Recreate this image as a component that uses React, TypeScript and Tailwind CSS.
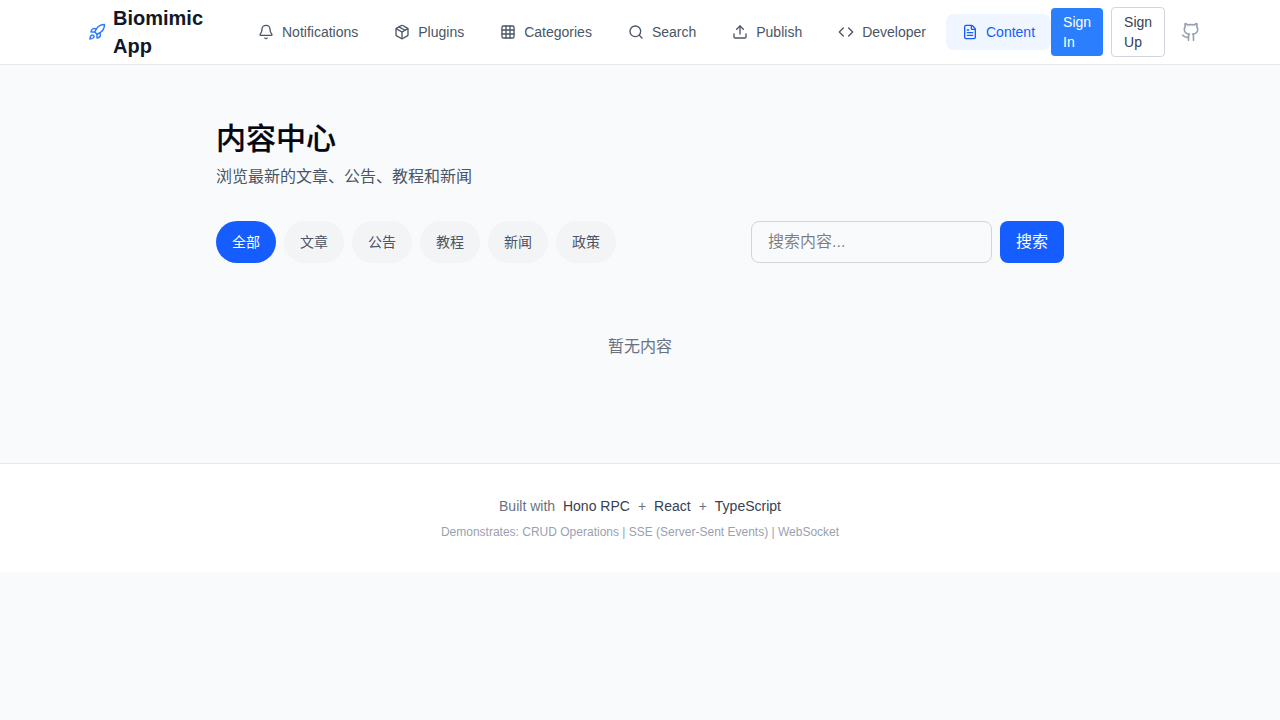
import { Bell, Code, FileText, Github, Grid3x3, Package, Rocket, Search, Upload } from "lucide-react";

const navItems = [
  { label: "Notifications", icon: Bell },
  { label: "Plugins", icon: Package },
  { label: "Categories", icon: Grid3x3 },
  { label: "Search", icon: Search },
  { label: "Publish", icon: Upload },
  { label: "Developer", icon: Code },
];

const tabs = ["全部", "文章", "公告", "教程", "新闻", "政策"];

const sans = "font-['Liberation_Sans','Noto_Sans_CJK_SC',sans-serif]";

export default function App() {
  return (
    <div className={`min-h-[720px] bg-[#f9fafb] ${sans}`}>
      <header className="bg-white border-b border-gray-200">
        <div className="max-w-[1120px] mx-auto h-16 flex items-center">
          <a className="w-[162px] shrink-0 flex items-center gap-[7px] pl-2 pr-4">
            <Rocket className="w-[18px] h-[18px] text-[#2b7fff] shrink-0" />
            <span className="text-xl leading-7 font-bold text-gray-900">Biomimic App</span>
          </a>
          <nav className="flex items-center gap-1">
            {navItems.map((item) => (
              <a key={item.label} className="flex items-center gap-2 px-4 h-9 rounded-lg text-sm text-gray-600 whitespace-nowrap">
                <item.icon className="w-4 h-4" />
                {item.label}
              </a>
            ))}
            <a className="flex items-center gap-2 pl-4 pr-4 h-9 rounded-lg text-sm text-[#155dfc] bg-[#eff6ff] whitespace-nowrap">
              <FileText className="w-4 h-4" />
              Content
            </a>
          </nav>
          <div className="flex items-center gap-2">
            <button className="w-[52px] px-3 py-1 rounded text-sm text-left text-white bg-[#2b7fff]">Sign In</button>
            <button className="w-[54px] px-3 py-1 rounded text-sm text-left text-gray-700 bg-white border border-gray-300">Sign Up</button>
            <a className="p-2 text-gray-400">
              <Github className="w-5 h-5" />
            </a>
          </div>
        </div>
      </header>

      <main className="max-w-4xl mx-auto px-6 pt-14 pb-16">
        <h1 className="text-3xl font-medium [-webkit-text-stroke:0.2px_#030712] text-gray-950 mb-2">内容中心</h1>
        <p className="text-base text-gray-600 mb-8">浏览最新的文章、公告、教程和新闻</p>
        <div className="flex items-center justify-between mb-8">
          <div className="flex gap-2">
            {tabs.map((tab, i) => (
              <button
                key={tab}
                className={`h-[42px] px-4 rounded-full text-sm ${i === 0 ? "bg-[#165dff] text-white" : "bg-gray-100 text-gray-600"}`}
              >
                {tab}
              </button>
            ))}
          </div>
          <div className="flex gap-2">
            <input
              placeholder="搜索内容..."
              className="w-[241px] h-[42px] px-4 rounded-lg border border-gray-300 text-base outline-none"
            />
            <button className="h-[42px] px-4 rounded-lg bg-[#165dff] text-white text-base">搜索</button>
          </div>
        </div>
        <p className="text-center text-base text-gray-500 py-10">暂无内容</p>
      </main>

      <footer className="bg-white border-t border-gray-200 py-8 text-center">
        <p className="text-sm text-gray-500 mb-2">
          Built with <span className="text-gray-700 ml-1">Hono RPC</span>
          <span className="mx-2">+</span>
          <span className="text-gray-700">React</span>
          <span className="mx-2">+</span>
          <span className="text-gray-700">TypeScript</span>
        </p>
        <p className="text-xs text-gray-400">Demonstrates: CRUD Operations | SSE (Server-Sent Events) | WebSocket</p>
      </footer>
    </div>
  );
}
